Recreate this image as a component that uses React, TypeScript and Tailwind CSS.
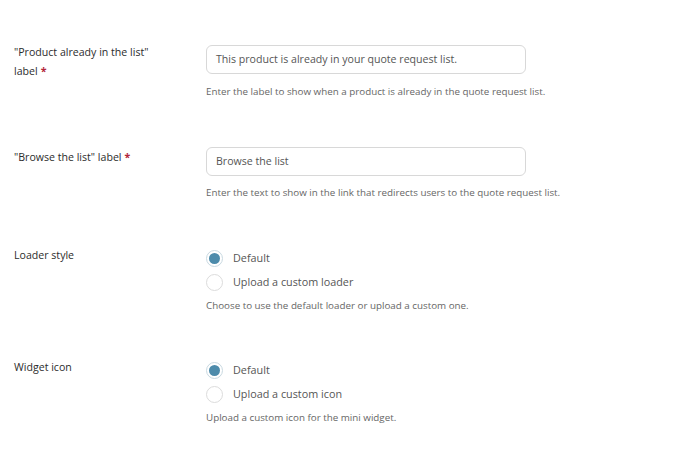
const font = { fontFamily: '"Open Sans", "Noto Sans", sans-serif' };

function Req() {
  return <span className="text-[#b3263a] font-bold pl-[3px]">*</span>;
}

function Radio({ checked, label }: { checked?: boolean; label: string }) {
  return (
    <label className="flex items-center h-[24px]">
      <span
        className={
          'w-[17px] h-[17px] rounded-full border flex items-center justify-center bg-white ' +
          (checked ? 'border-[#c9d9e1]' : 'border-[#dcdcdc]')
        }
      >
        {checked && <span className="w-[11px] h-[11px] rounded-full bg-[#4d8bab]" />}
      </span>
      <span className="ml-[10px] text-[10.8px] text-[#555]">{label}</span>
    </label>
  );
}

function Row({ label, className, children }: { label: React.ReactNode; className?: string; children: React.ReactNode }) {
  return (
    <div className={'flex ' + (className ?? '')}>
      <div className="w-[192px] shrink-0 pr-4 text-[10.6px] leading-[19px] text-[#2c2c2c]">{label}</div>
      <div className="flex-1">{children}</div>
    </div>
  );
}

function Help({ children }: { children: React.ReactNode }) {
  return <p className="text-[9.8px] text-[#666] leading-[14px]">{children}</p>;
}

function TextBox({ value }: { value: string }) {
  return (
    <div className="w-[320px] h-[29px] border border-[#d8d8d8] rounded-[6px] px-[9px] flex items-center text-[10.6px] text-[#555]">
      {value}
    </div>
  );
}

export default function App() {
  return (
    <div className="w-[699px] h-[452px] bg-white pl-[14px] pt-[42px]" style={font}>
      <Row
        label={
          <div className="pt-[1px] max-w-[160px]">
            "Product already in the list" label
            <Req />
          </div>
        }
      >
        <div className="mt-[3px]">
          <TextBox value="This product is already in your quote request list." />
        </div>
        <div className="mt-[11px]">
          <Help>Enter the label to show when a product is already in the quote request list.</Help>
        </div>
      </Row>
      <Row
        className="mt-[48px]"
        label={
          <div className="pt-[1px]">
            "Browse the list" label
            <Req />
          </div>
        }
      >
        <TextBox value="Browse the list" />
        <div className="mt-[10px]">
          <Help>Enter the text to show in the link that redirects users to the quote request list.</Help>
        </div>
      </Row>
      <Row className="mt-[46px]" label={<div>Loader style</div>}>
        <Radio checked label="Default" />
        <Radio label="Upload a custom loader" />
        <div className="mt-[5px]">
          <Help>Choose to use the default loader or upload a custom one.</Help>
        </div>
      </Row>
      <Row className="mt-[45px]" label={<div>Widget icon</div>}>
        <Radio checked label="Default" />
        <Radio label="Upload a custom icon" />
        <div className="mt-[5px]">
          <Help>Upload a custom icon for the mini widget.</Help>
        </div>
      </Row>
    </div>
  );
}
